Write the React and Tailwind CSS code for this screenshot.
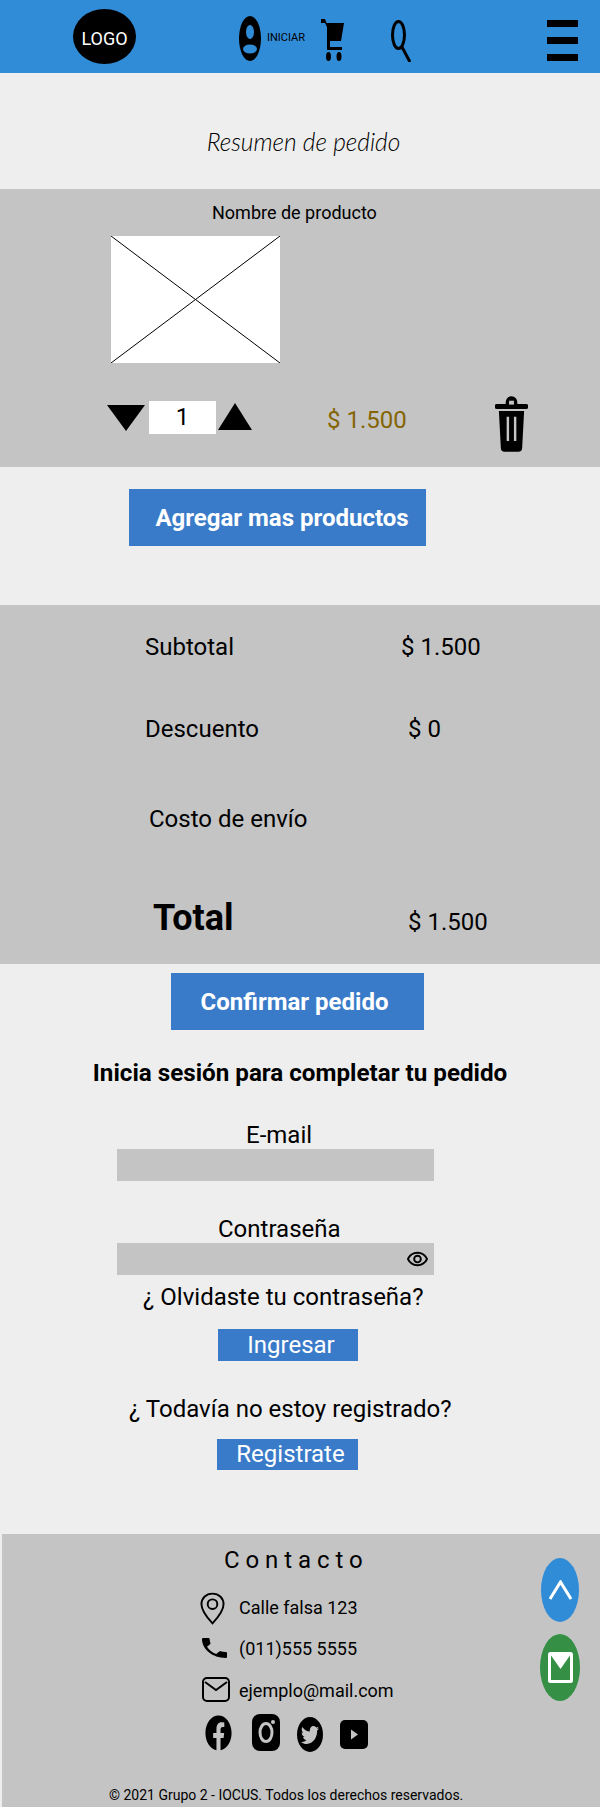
import React from 'react';
import { MdOutlineVisibility } from 'react-icons/md';
import { FaFacebook, FaTwitter } from 'react-icons/fa';

function CartIcon() {
  return (
    <svg width="23" height="43" viewBox="0 0 23 43" className="block mt-[19px]">
      <path d="M0 0h4l1.5 4H23l-3 18H9v6h12v3H6V8L4 4H0z" fill="black" />
      <ellipse cx="7.5" cy="37.5" rx="2.5" ry="4.5" fill="black" />
      <ellipse cx="18" cy="37.5" rx="2.5" ry="4.5" fill="black" />
    </svg>
  );
}

function Trash() {
  return (
    <svg width="33" height="57" viewBox="0 0 34 58" className="block">
      <path d="M11 8V6a6 6 0 0 1 12 0v2h9a2 2 0 0 1 0 5H2a2 2 0 0 1 0-5z" fill="black" />
      <path d="M4 15h26l-2 38a4 4 0 0 1-4 4H10a4 4 0 0 1-4-4z" fill="black" />
      <rect x="12" y="21" width="2.5" height="25" fill="#c4c4c4" />
      <rect x="19.5" y="21" width="2.5" height="25" fill="#c4c4c4" />
      <rect x="14.5" y="4.5" width="5" height="4" fill="#c4c4c4" />
    </svg>
  );
}

function ContactRow({ icon, text, cls, textCls }) {
  return (
    <div className={'flex items-center ml-[198px] ' + cls}>
      <div className="w-[39px] flex">{icon}</div>
      <span className={'text-[18px] leading-[24px] ' + textCls}>{text}</span>
    </div>
  );
}

export default function App() {
  return (
    <div className="w-[600px] h-[1807px] overflow-hidden bg-[#eeeeee] text-black font-['Roboto',sans-serif]">
      {/* header */}
      <header className="h-[73px] bg-[#318cd8] flex items-start">
        <div className="ml-[73px] mt-[9px] w-[63px] h-[55px] rounded-[50%] bg-black text-white text-[18px] flex items-center justify-center pt-[3px]">LOGO</div>
        <svg width="22" height="45" viewBox="0 0 22 45" className="ml-[103px] mt-[16px]">
          <ellipse cx="11" cy="22.5" rx="11" ry="22.5" fill="black" />
          <ellipse cx="11" cy="16" rx="4" ry="7" fill="#318cd8" />
          <ellipse cx="11" cy="33" rx="7" ry="4.5" fill="#318cd8" />
        </svg>
        <span className="ml-[6px] mt-[31px] w-[54px] text-[11px] leading-[14px]">INICIAR</span>
        <CartIcon />
        <svg width="20" height="42" viewBox="0 0 20 42" className="ml-[47px] mt-[20px]">
          <ellipse cx="7.5" cy="15" rx="6" ry="13.5" fill="none" stroke="black" strokeWidth="3" />
          <path d="M11 27l8 15" stroke="black" strokeWidth="3" fill="none" />
        </svg>
        <div className="ml-[136px] mt-[20px] flex flex-col gap-[10px]">
          <div className="w-[31px] h-[7px] bg-black" />
          <div className="w-[31px] h-[7px] bg-black" />
          <div className="w-[31px] h-[7px] bg-black" />
        </div>
      </header>

      <h1 className="h-[116px] flex items-center justify-center text-[24.5px] font-['Lato',sans-serif] italic font-light pl-[7px] pt-[22px]">Resumen de pedido</h1>

      {/* producto */}
      <section className="h-[278px] bg-[#c4c4c4]">
        <p className="text-[18px] leading-[24px] pt-[12px] pl-[212px]">Nombre de producto</p>
        <svg width="169" height="127" viewBox="0 0 169 127" className="ml-[111px] mt-[11px] block">
          <rect width="169" height="127" fill="white" />
          <path d="M0 0L169 127M169 0L0 127" stroke="black" strokeWidth="1" />
        </svg>
        <div className="flex items-start mt-[33px]">
          <div className="ml-[107px] mt-[9px] w-0 h-0 border-l-[19px] border-r-[19px] border-t-[26px] border-l-transparent border-r-transparent border-t-black" />
          <div className="ml-[4px] mt-[5px] w-[67px] h-[33px] bg-white text-[24px] flex items-center justify-center pb-[1px]">1</div>
          <div className="ml-[2px] mt-[7px] w-0 h-0 border-l-[17px] border-r-[17px] border-b-[27px] border-l-transparent border-r-transparent border-b-black" />
          <span className="ml-[75px] mt-[10px] w-[168px] text-[24px] leading-[28px] text-[#856404]">$ 1.500</span>
          <Trash />
        </div>
      </section>

      <div className="pt-[22px] pl-[129px]">
        <button className="w-[297px] h-[57px] bg-[#3a7bc9] text-white text-[24px] font-bold pl-[9px]">Agregar mas productos</button>
      </div>

      {/* totales */}
      <section className="mt-[59px] h-[359px] bg-[#c4c4c4]">
        <div className="flex text-[24px] pt-[28px] leading-[28px]">
          <span className="ml-[145px] w-[256px]">Subtotal</span><span>$ 1.500</span>
        </div>
        <div className="flex text-[24px] pt-[54px] leading-[28px]">
          <span className="ml-[145px] w-[263px]">Descuento</span><span>$ 0</span>
        </div>
        <div className="text-[24px] pl-[149px] pt-[62px] leading-[28px]">Costo de envío</div>
        <div className="flex items-end pt-[63px] leading-[44px]">
          <span className="ml-[153px] w-[255px] text-[36px] font-bold">Total</span>
          <span className="text-[24px] leading-[36px]">$ 1.500</span>
        </div>
      </section>

      <div className="pt-[9px] pl-[171px]">
        <button className="w-[253px] h-[57px] bg-[#3a7bc9] text-white text-[24px] font-bold pr-[6px]">Confirmar pedido</button>
      </div>

      {/* login */}
      <h2 className="text-center text-[24.2px] font-bold leading-[28px] pt-[29px]">Inicia sesión para completar tu pedido</h2>
      <p className="text-[24px] leading-[28px] pt-[34px] pl-[246px]">E-mail</p>
      <div className="ml-[117px] w-[317px] h-[32px] bg-[#c4c4c4]" />
      <p className="text-[24px] leading-[28px] pt-[34px] pl-[218px]">Contraseña</p>
      <div className="ml-[117px] w-[317px] h-[32px] bg-[#c4c4c4] flex items-center justify-end pr-[5px]">
        <MdOutlineVisibility size={23} />
      </div>
      <p className="text-[24px] leading-[28px] pt-[8px] pl-[143px]">¿ Olvidaste tu contraseña?</p>
      <div className="pt-[18px] pl-[218px]">
        <button className="block w-[140px] h-[32px] bg-[#3a7bc9] text-white text-[24px] leading-[32px] pl-[6px]">Ingresar</button>
      </div>
      <p className="text-[24px] leading-[28px] pt-[34px] pl-[129px]">¿ Todavía no estoy registrado?</p>
      <div className="pt-[16px] pl-[217px]">
        <button className="block w-[141px] h-[31px] bg-[#3a7bc9] text-white text-[24px] leading-[31px] pl-[6px]">Registrate</button>
      </div>

      {/* footer */}
      <footer className="mt-[64px] ml-[2px] h-[274px] bg-[#c4c4c4] relative">
        <p className="text-[24px] leading-[28px] pt-[12px] pl-[222px] tracking-[5.9px]">Contacto</p>
        <ContactRow cls="mt-[18px]" textCls="-mt-[2px]" text="Calle falsa 123" icon={
          <svg width="25" height="33" viewBox="0 0 26 34"><path d="M13 1.5C6 1.5 1.5 6.5 1.5 12.5c0 7 6 14 11.5 20 5.5-6 11.5-13 11.5-20 0-6-4.5-11-11.5-11z" fill="none" stroke="black" strokeWidth="2" /><circle cx="13" cy="12.5" r="5" fill="none" stroke="black" strokeWidth="2" /></svg>
        } />
        <ContactRow cls="mt-[12px]" textCls="" text="(011)555 5555" icon={
          <svg width="25" height="20" viewBox="3 3 18 18" preserveAspectRatio="none" className="ml-[2px] -mt-[2px]"><path d="M6.62 10.79c1.44 2.83 3.76 5.14 6.59 6.59l2.2-2.2c.27-.27.67-.36 1.02-.24 1.12.37 2.33.57 3.57.57.55 0 1 .45 1 1V20c0 .55-.45 1-1 1-9.39 0-17-7.61-17-17 0-.55.45-1 1-1h3.5c.55 0 1 .45 1 1 0 1.25.2 2.45.57 3.57.11.35.03.74-.25 1.02l-2.2 2.2z" fill="black" /></svg>
        } />
        <ContactRow cls="mt-[15px]" textCls="mt-[3px]" text="ejemplo@mail.com" icon={
          <svg width="28" height="25" viewBox="0 0 28 25" className="ml-[2px]"><rect x="1" y="1" width="26" height="23" rx="4" fill="none" stroke="black" strokeWidth="2" /><path d="M3 5l11 8 11-8" fill="none" stroke="black" strokeWidth="2" /></svg>
        } />
        <div className="flex items-start ml-[203px] mt-[11px]">
          <FaFacebook preserveAspectRatio="none" className="w-[27px] h-[36px] mt-[1px]" />
          <svg width="28" height="37" viewBox="0 0 28 37" className="ml-[20px]"><rect width="28" height="37" rx="8" fill="black" /><ellipse cx="14" cy="18.5" rx="6" ry="9" fill="none" stroke="#c4c4c4" strokeWidth="3" /><circle cx="21" cy="8" r="2" fill="#c4c4c4" /></svg>
          <div className="ml-[17px] mt-[3px] w-[26px] h-[35px] rounded-[50%] bg-black flex items-center justify-center">
            <FaTwitter preserveAspectRatio="none" className="w-[18px] h-[22px] text-[#c4c4c4]" />
          </div>
          <svg width="28" height="29" viewBox="0 0 28 29" className="ml-[17px] mt-[6px]"><rect width="28" height="29" rx="5" fill="black" /><path d="M11 9.5l7 5-7 5z" fill="#c4c4c4" /></svg>
        </div>
        <p className="absolute bottom-[3px] left-[107px] text-[14px] leading-[20px] whitespace-nowrap">© 2021 Grupo 2 - IOCUS. Todos los derechos reservados.</p>

        <button className="absolute left-[539px] top-[24px] w-[38px] h-[64px] rounded-[50%] bg-[#318cd8] flex items-center justify-center">
          <svg width="23" height="20" viewBox="0 0 23 20"><path d="M1 19L11.5 2 22 19" fill="none" stroke="white" strokeWidth="3" /></svg>
        </button>
        <button className="absolute left-[538px] top-[100px] w-[40px] h-[67px] rounded-[50%] bg-[#359045] flex items-center justify-center">
          <svg width="25" height="31" viewBox="0 0 25 31"><rect x="1.5" y="1.5" width="22" height="28" rx="1" fill="none" stroke="white" strokeWidth="3" /><path d="M2 2l10.5 15L23 2z" fill="white" /></svg>
        </button>
      </footer>
    </div>
  );
}
